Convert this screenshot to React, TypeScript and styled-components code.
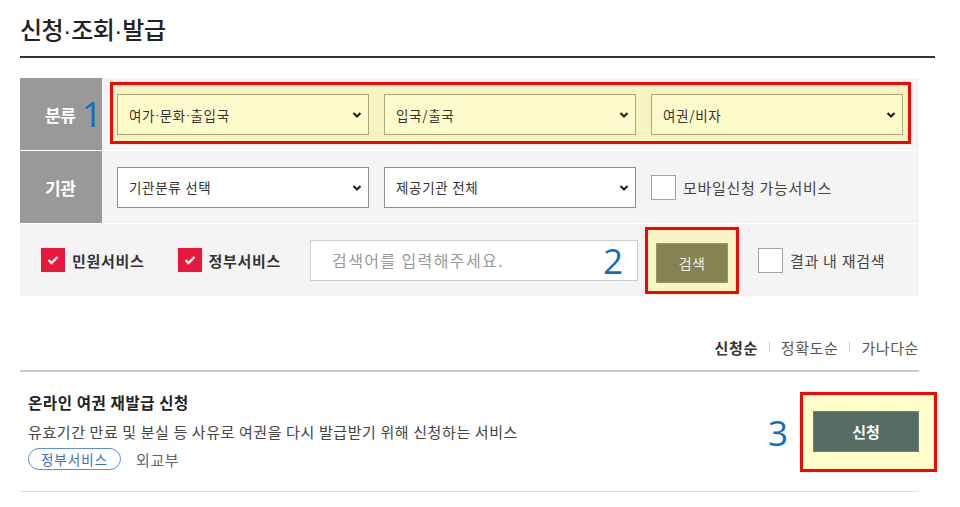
import React from "react";
import styled, { createGlobalStyle } from "styled-components";

const Global = createGlobalStyle`
  html, body { margin: 0; padding: 0; background: #fff; }
  body { font-family: "Noto Sans CJK KR", "Noto Sans", sans-serif; color: #333; }
  * { box-sizing: border-box; }
`;

const Page = styled.div`
  width: 960px;
  padding: 0 25px 0 20px;
`;

const Title = styled.h1`
  margin: 0;
  height: 58px;
  padding-top: 14px;
  font-size: 24px;
  line-height: 30px;
  font-weight: 500;
  color: #222;
  letter-spacing: -0.5px;
  border-bottom: 2px solid #333;
`;

const Dot = styled.span`
  font-family: "Liberation Sans", sans-serif;
  letter-spacing: 0;
`;

const Panel = styled.div`
  width: 899px;
  margin-top: 20px;
  display: grid;
  grid-template-columns: 82px 1fr;
  grid-auto-rows: 72px;
  row-gap: 1px;
  background: #fff;
`;

const Label = styled.div`
  position: relative;
  background: #999;
  color: #fff;
  font-weight: 700;
  font-size: 17px;
  display: flex;
  align-items: center;
  padding-left: 25px;
  letter-spacing: -0.3px;
`;

const Num = styled.span<{ $size?: number }>`
  font-family: "Open Sans", "Liberation Sans", sans-serif;
  font-weight: 400;
  font-size: ${(p) => p.$size ?? 35}px;
  line-height: 1;
  color: #0b70c2;
  letter-spacing: 0;
`;

const LabelNum = styled(Num)`
  position: absolute;
  left: 62px;
  top: 18px;
`;

const Cell = styled.div`
  background: #f4f4f4;
  display: flex;
  align-items: center;
  gap: 15px;
  padding-left: 15px;
`;

const HighlightCell = styled.div`
  background: #f4f4f4;
  padding: 4px 8px 6px 8px;
`;

const RedBox = styled.div`
  height: 100%;
  border: 3px solid #f00;
  background: #f7f4c3;
  display: flex;
  gap: 15px;
  padding: 9px 0 0 4px;
`;

const SelectWrap = styled.div<{ $hl?: boolean }>`
  position: relative;
  width: 252px;
  height: 41px;
  flex: none;
  border: 1px solid ${(p) => (p.$hl ? "#aca97f" : "#8e8e98")};
  background: ${(p) => (p.$hl ? "#fdfbcb" : "#fff")};
  font-size: 13.5px;
  color: #333;
  display: flex;
  align-items: center;
  padding-left: 11px;
  letter-spacing: 0.7px;
`;

const Chevron = styled.svg`
  position: absolute;
  right: 6px;
  top: 16px;
`;

const Select = ({ children, hl }: { children: React.ReactNode; hl?: boolean }) => (
  <SelectWrap $hl={hl}>
    {children}
    <Chevron width="10" height="8" viewBox="0 0 10 8">
      <path d="M1.5 2 L5 5.5 L8.5 2" fill="none" stroke="#222" strokeWidth="2.2" />
    </Chevron>
  </SelectWrap>
);

const Box = styled.span`
  width: 25px;
  height: 25px;
  border: 1px solid #a3a3a3;
  background: #fff;
  flex: none;
`;

const CheckLabel = styled.label<{ $ml?: number }>`
  display: flex;
  align-items: center;
  gap: 7px;
  margin-left: ${(p) => p.$ml ?? 0}px;
  font-size: 15px;
  color: #444;
  letter-spacing: 0.7px;
`;

const RedCheck = styled.span`
  width: 24px;
  height: 24px;
  background: #e8173b;
  display: flex;
  align-items: center;
  justify-content: center;
  flex: none;
`;

const BoldText = styled.span`
  font-weight: 700;
  color: #333;
`;

const SearchRow = styled.div`
  grid-column: 1 / span 2;
  background: #f4f4f4;
  display: flex;
  align-items: center;
  padding-left: 21px;
`;

const SearchInput = styled.div`
  width: 328px;
  height: 41px;
  margin-left: 29px;
  border: 1px solid #cfcfcf;
  background: #fff;
  display: flex;
  align-items: center;
  justify-content: space-between;
  padding: 0 14px 0 21px;
  font-size: 16px;
  color: #999;
  letter-spacing: 1.4px;
`;

const BtnBox = styled.div<{ $bg: string }>`
  border: 3px solid #f00;
  background: ${(p) => p.$bg};
  display: flex;
  flex: none;
`;

const SearchBtnBox = styled(BtnBox)`
  margin-left: 7px;
  width: 94px;
  height: 67px;
  padding: 13px 0 0 8px;
`;

const SearchBtn = styled.button`
  width: 72px;
  height: 40px;
  border: 1px solid #9a9766;
  background: #858253;
  color: #f1f1e4;
  font-family: inherit;
  font-size: 14px;
  letter-spacing: 0.5px;
  padding: 0;
`;

const Sort = styled.div`
  width: 899px;
  margin-top: 39px;
  display: flex;
  justify-content: flex-end;
  align-items: center;
  font-size: 15px;
  height: 24px;
`;

const SortItem = styled.span<{ $active?: boolean }>`
  font-weight: ${(p) => (p.$active ? 700 : 400)};
  color: ${(p) => (p.$active ? "#333" : "#555")};
  letter-spacing: 0.6px;
`;

const Sep = styled.span`
  width: 1px;
  height: 10px;
  background: #ccc;
  margin: 0 11px;
`;

const List = styled.div`
  width: 899px;
  margin-top: 11px;
  border-top: 2px solid #ccc;
`;

const Item = styled.div`
  display: flex;
  align-items: center;
  border-bottom: 1px solid #ddd;
  padding: 14px 0 15px 8px;
  height: 120px;
`;

const ItemBody = styled.div`
  flex: 1;
  display: flex;
  flex-direction: column;
  align-self: flex-start;
  margin-top: 5px;
`;

const ItemTitle = styled.div`
  font-size: 15.5px;
  font-weight: 700;
  color: #222;
  line-height: 22px;
  letter-spacing: 0.6px;
`;

const ItemDesc = styled.div`
  margin-top: 9px;
  font-size: 15px;
  color: #444;
  line-height: 20px;
  letter-spacing: 0.6px;
`;

const Meta = styled.div`
  margin-top: 6px;
  display: flex;
  align-items: center;
  gap: 15px;
  font-size: 15px;
  color: #666;
  letter-spacing: 0.6px;
`;

const Tag = styled.span`
  height: 22px;
  width: 93px;
  border: 1px solid #5b90dc;
  border-radius: 11px;
  color: #3d6fbf;
  font-size: 13.5px;
  display: flex;
  align-items: center;
  justify-content: center;
  letter-spacing: 1px;
`;

const ApplyArea = styled.div`
  display: flex;
  align-items: center;
  margin-right: -18px;
  margin-top: 2px;
`;

const ApplyBox = styled(BtnBox)`
  margin-left: 12px;
  width: 137px;
  height: 80px;
  padding: 16px 0 0 10px;
`;

const ApplyBtn = styled.button`
  width: 106px;
  height: 41px;
  border: 1px solid #6e8479;
  background: #546c61;
  color: #fff;
  font-family: inherit;
  font-size: 15px;
  font-weight: 700;
  padding: 0;
`;

const CheckMark = () => (
  <svg width="12" height="10" viewBox="0 0 12 10">
    <path d="M1.5 5 L4.5 8 L10.5 2" fill="none" stroke="#fff" strokeWidth="2.4" />
  </svg>
);

export default function App() {
  return (
    <Page>
      <Global />
      <Title>
        신청<Dot>·</Dot>조회<Dot>·</Dot>발급
      </Title>
      <Panel>
        <Label>
          분류
          <LabelNum>1</LabelNum>
        </Label>
        <HighlightCell>
          <RedBox>
            <Select hl>
              여가<Dot>·</Dot>문화<Dot>·</Dot>출입국
            </Select>
            <Select hl>입국/출국</Select>
            <Select hl>여권/비자</Select>
          </RedBox>
        </HighlightCell>
        <Label>기관</Label>
        <Cell>
          <Select>기관분류 선택</Select>
          <Select>제공기관 전체</Select>
          <CheckLabel>
            <Box />
            모바일신청 가능서비스
          </CheckLabel>
        </Cell>
        <SearchRow>
          <CheckLabel>
            <RedCheck>
              <CheckMark />
            </RedCheck>
            <BoldText>민원서비스</BoldText>
          </CheckLabel>
          <CheckLabel $ml={33}>
            <RedCheck>
              <CheckMark />
            </RedCheck>
            <BoldText>정부서비스</BoldText>
          </CheckLabel>
          <SearchInput>
            검색어를 입력해주세요.
            <Num>2</Num>
          </SearchInput>
          <SearchBtnBox $bg="#f8f5c4">
            <SearchBtn>검색</SearchBtn>
          </SearchBtnBox>
          <CheckLabel $ml={19}>
            <Box />
            결과 내 재검색
          </CheckLabel>
        </SearchRow>
      </Panel>
      <Sort>
        <SortItem $active>신청순</SortItem>
        <Sep />
        <SortItem>정확도순</SortItem>
        <Sep />
        <SortItem>가나다순</SortItem>
      </Sort>
      <List>
        <Item>
          <ItemBody>
            <ItemTitle>온라인 여권 재발급 신청</ItemTitle>
            <ItemDesc>유효기간 만료 및 분실 등 사유로 여권을 다시 발급받기 위해 신청하는 서비스</ItemDesc>
            <Meta>
              <Tag>정부서비스</Tag>
              외교부
            </Meta>
          </ItemBody>
          <ApplyArea>
            <Num>3</Num>
            <ApplyBox $bg="#ffffcc">
              <ApplyBtn>신청</ApplyBtn>
            </ApplyBox>
          </ApplyArea>
        </Item>
      </List>
    </Page>
  );
}
